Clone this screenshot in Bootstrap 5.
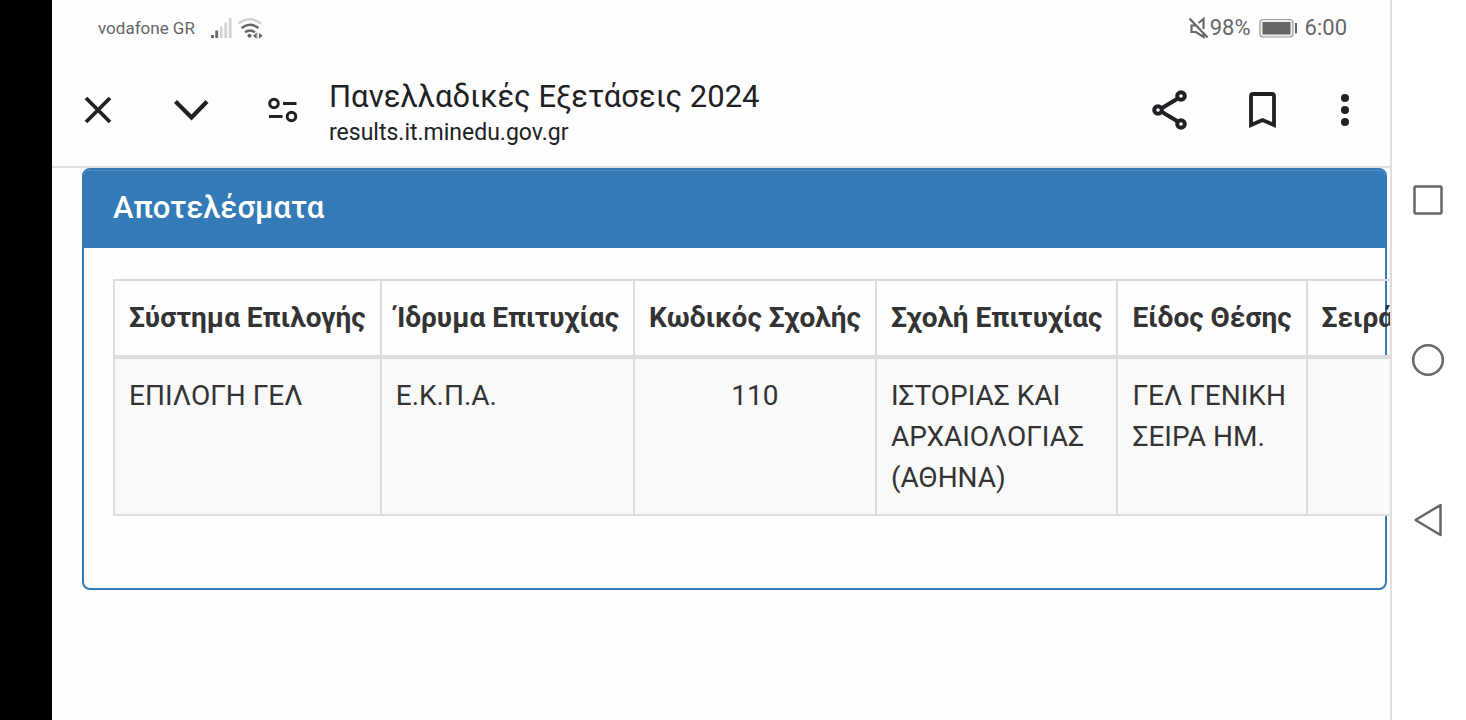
<!DOCTYPE html>
<html lang="el">
<head>
<meta charset="utf-8">
<meta name="viewport" content="width=device-width, initial-scale=1">
<title>Πανελλαδικές Εξετάσεις 2024</title>
<link href="https://cdn.jsdelivr.net/npm/bootstrap@5.3.0/dist/css/bootstrap.min.css" rel="stylesheet">
<style>
  body { font-family: Roboto, "Noto Sans", sans-serif; background: #fff; color: #333; }
  svg { display: block; flex: none; }
  .cutout { width: 52px; background: #000; }
  .viewport { min-width: 0; background: #fefefe; }
  .status { height: 56px; padding: 0 43px 0 46px; color: #666; line-height: 24px; }
  .carrier { font-size: 17px; }
  .status-nums { font-size: 22px; }
  .toolbar { height: 112px; padding-bottom: 2px; border-bottom: 2px solid #dfdfdf; color: #202124; }
  .tool { padding: 0; border: 0; background: none; color: inherit; }
  .tools-left { gap: 56px; padding: 0 30px 0 27px; }
  .tools-right { gap: 52px; padding-right: 32px; }
  .site-name { padding-top: 7px; }
  .site-title { font-size: 31px; line-height: 38px; }
  .site-host { font-size: 23px; line-height: 34px; }
  .results { margin: 0 3px 0 30px; border: 2px solid #337ab7; border-radius: 8px; background: transparent; }
  .results-head { padding: 18px 29px 20px; border: 0; border-radius: 5px 5px 0 0; background: #337ab7; color: #fff; box-shadow: inset 0 1px #5590c4; }
  .results-title { font-size: 31px; line-height: 40px; font-weight: 500; }
  .results-body { padding: 31px 29px 72px; }
  .grades { --bs-table-bg: transparent; width: auto; margin: 0; color: #333; font-size: 28px; line-height: 41px; border-color: #ddd; }
  .grades > :not(caption) > * > * { padding: 16px 14px; border: 2px solid #ddd; color: #333; box-shadow: none; }
  .grades > thead > tr > th { border-bottom-width: 4px; padding-bottom: 17px; white-space: nowrap; font-weight: 700; }
  .grades > tbody > tr > td { background: #f9f9f9; }
  .grades .rank { min-width: 200px; }
  .navrail { width: 76px; border-left: 2px solid #dfdfdf; background: #fff; color: #666; padding: 183px 2px 183px 0; }
</style>
</head>
<body>
<div class="d-flex min-vh-100 overflow-hidden">
  <div class="cutout flex-shrink-0"></div>

  <div class="viewport flex-grow-1 overflow-hidden">
    <div class="status d-flex justify-content-between align-items-center">
      <div class="d-flex align-items-center">
        <span class="carrier">vodafone GR</span>
        <svg class="ms-3" width="52" height="22" viewBox="211 16 52 22" aria-label="Σήμα και Wi-Fi">
          <path d="M212.500 34v3M216.700 29.500v7.500" stroke="#666" stroke-width="2.800" fill="none"/>
          <path d="M221.200 25.500V37M225.700 21.500V37M230.200 17V37" stroke="#d2d2d2" stroke-width="2.800" fill="none"/>
          <path d="M238.500 22.500q11-8.500 22.500 0" fill="none" stroke="#d0d0d0" stroke-width="2.500"/>
          <path d="M241.500 27q8.500-6.500 17 0M245 31.200q5-3.500 10 0" fill="none" stroke="#666" stroke-width="2.500"/>
          <circle cx="249.500" cy="34.800" r="2" fill="#666"/>
          <path d="M253 34.700l3.500-3v6zM262.500 34.700l-3.500-3v6z" fill="#666"/>
          <path d="M257 31.500v6" stroke="#888" stroke-width="1"/>
        </svg>
      </div>
      <div class="status-nums d-flex align-items-center">
        <svg width="22" height="22" viewBox="1189 16 22 22" aria-label="Σίγαση" fill="none" stroke="#666" stroke-width="2.200">
          <path d="M1190.500 17.500l18 19M1197 24.500h-4.500v6.500h4.500l7.500 5v-4M1199.500 22l5-4v10"/>
        </svg>
        <span>98%</span>
        <svg class="mx-2" width="38" height="20" viewBox="1259 17 38 20" aria-label="Μπαταρία">
          <rect x="1260" y="18.500" width="33" height="17.500" rx="3" fill="#eee" stroke="#999" stroke-width="1.200"/>
          <rect x="1262.500" y="21" width="28" height="12.500" fill="#666"/>
          <path d="M1296 22v10.500" stroke="#666" stroke-width="2"/>
        </svg>
        <span>6:00</span>
      </div>
    </div>

    <header class="toolbar d-flex align-items-center">
      <div class="tools-left d-flex align-items-center">
        <button class="tool" type="button" aria-label="Κλείσιμο">
          <svg width="38" height="38" viewBox="0 0 38 38" fill="none" stroke="currentColor" stroke-width="3.800"><path d="M7 7l24 24M31 7L7 31"/></svg>
        </button>
        <button class="tool" type="button" aria-label="Ελαχιστοποίηση">
          <svg width="36" height="38" viewBox="0 0 36 38" fill="none" stroke="currentColor" stroke-width="4.200"><path d="M2.500 10.500L18.500 26.500 34 10.500"/></svg>
        </button>
        <button class="tool" type="button" aria-label="Πληροφορίες ιστοτόπου">
          <svg width="34" height="38" viewBox="0 0 34 38" fill="none" stroke="currentColor" stroke-width="3"><circle cx="9" cy="12.500" r="4.300"/><path d="M18 12.500h13.500M4 25.500h13.500"/><circle cx="26.500" cy="25.500" r="4.300"/></svg>
        </button>
      </div>
      <div class="site-name flex-grow-1">
        <div class="site-title">Πανελλαδικές Εξετάσεις 2024</div>
        <div class="site-host">results.it.minedu.gov.gr</div>
      </div>
      <div class="tools-right d-flex align-items-center">
        <button class="tool" type="button" aria-label="Κοινοποίηση">
          <svg width="40" height="42" viewBox="0 0 40 42" fill="none" stroke="currentColor" stroke-width="4"><path d="M10 19l15-9M10 23l15 9"/><circle cx="6" cy="21" r="3.800"/><circle cx="29" cy="7" r="3.800"/><circle cx="29" cy="35" r="3.800"/></svg>
        </button>
        <button class="tool" type="button" aria-label="Σελιδοδείκτης">
          <svg width="36" height="42" viewBox="0 0 36 42" fill="none" stroke="currentColor" stroke-width="3.800"><path d="M7 36V7q0-2 2-2h19q2 0 2 2v29l-11.500-5z"/></svg>
        </button>
        <button class="tool" type="button" aria-label="Περισσότερα">
          <svg width="26" height="42" viewBox="0 0 26 42" fill="currentColor"><circle cx="13" cy="9" r="4"/><circle cx="13" cy="21" r="4"/><circle cx="13" cy="33" r="4"/></svg>
        </button>
      </div>
    </header>

    <main>
      <section class="card results">
        <div class="card-header results-head"><h1 class="results-title m-0">Αποτελέσματα</h1></div>
        <div class="card-body results-body">
          <table class="table grades">
            <thead>
              <tr>
                <th scope="col">Σύστημα Επιλογής</th>
                <th scope="col">Ίδρυμα Επιτυχίας</th>
                <th scope="col">Κωδικός Σχολής</th>
                <th scope="col">Σχολή Επιτυχίας</th>
                <th scope="col">Είδος Θέσης</th>
                <th scope="col" class="rank">Σειρά</th>
              </tr>
            </thead>
            <tbody>
              <tr>
                <td>ΕΠΙΛΟΓΗ ΓΕΛ</td>
                <td>Ε.Κ.Π.Α.</td>
                <td class="text-center">110</td>
                <td>ΙΣΤΟΡΙΑΣ ΚΑΙ ΑΡΧΑΙΟΛΟΓΙΑΣ (ΑΘΗΝΑ)</td>
                <td>ΓΕΛ ΓΕΝΙΚΗ ΣΕΙΡΑ ΗΜ.</td>
                <td></td>
              </tr>
            </tbody>
          </table>
        </div>
      </section>
    </main>
  </div>

  <nav class="navrail flex-shrink-0 d-flex flex-column align-items-center justify-content-between vh-100" aria-label="Πλοήγηση συστήματος">
    <button class="tool" type="button" aria-label="Πρόσφατα">
      <svg width="34" height="34" viewBox="0 0 34 34" fill="none" stroke="currentColor" stroke-width="2.500"><rect x="3.500" y="3.500" width="27" height="27" rx="1.500"/></svg>
    </button>
    <button class="tool" type="button" aria-label="Αρχική">
      <svg width="34" height="34" viewBox="0 0 34 34" fill="none" stroke="currentColor" stroke-width="2.500"><circle cx="17" cy="17" r="14.800"/></svg>
    </button>
    <button class="tool" type="button" aria-label="Πίσω">
      <svg width="34" height="34" viewBox="0 0 34 34" fill="none" stroke="currentColor" stroke-width="2.500" stroke-linejoin="round"><path d="M4.500 17L29.500 2v30z"/></svg>
    </button>
  </nav>
</div>
<script src="https://cdn.jsdelivr.net/npm/bootstrap@5.3.0/dist/js/bootstrap.bundle.min.js"></script>
</body>
</html>
